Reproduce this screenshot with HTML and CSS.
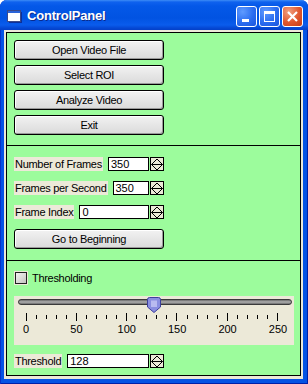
FILE: index.html
```html
<!DOCTYPE html>
<html lang="en">
<head>
<meta charset="utf-8">
<link rel="stylesheet" href="styles.css">
</head>
<body>
<div class="window">
  <div class="titlebar">
    <svg class="app-icon" width="16" height="14" viewBox="0 0 16 14">
      <rect x="1.5" y="1.5" width="13" height="11" fill="#fff" stroke="#3a4a8a"/>
      <rect x="2" y="2" width="12" height="2" fill="#2a63d8"/>
      <rect x="15" y="3" width="1" height="10" fill="#0b2f9a"/>
      <rect x="3" y="13" width="13" height="1" fill="#0b2f9a"/>
    </svg>
    <span class="title">ControlPanel</span>
    <div class="caption-buttons">
      <div class="cap-btn">
        <svg width="21" height="21" viewBox="0 0 21 21"><rect x="6" y="13" width="7" height="3" fill="#fff"/></svg>
      </div>
      <div class="cap-btn">
        <svg width="21" height="21" viewBox="0 0 21 21"><rect x="5.5" y="5.5" width="10" height="10" fill="none" stroke="#fff"/><rect x="5" y="5" width="11" height="3" fill="#fff"/></svg>
      </div>
      <div class="cap-btn close">
        <svg width="21" height="21" viewBox="0 0 21 21"><path d="M6 6 L15 15 M15 6 L6 15" stroke="#fff" stroke-width="2.2"/></svg>
      </div>
    </div>
  </div>
  <div class="client">
    <div class="panel">
      <div class="section commands">
        <button>Open Video File</button>
        <button>Select ROI</button>
        <button>Analyze Video</button>
        <button>Exit</button>
      </div>
      <div class="section frames">
        <div class="field">
          <span class="label">Number of Frames</span>
          <span class="textbox">350</span>
          <span class="spin"><svg width="12" height="13" viewBox="0 0 12 13"><path d="M0.5 6.5 L6 1 L11.5 6.5 L6 12 Z M0.5 6.5 H11.5" fill="none" stroke="#000"/></svg></span>
        </div>
        <div class="field">
          <span class="label">Frames per Second</span>
          <span class="textbox">350</span>
          <span class="spin"><svg width="12" height="13" viewBox="0 0 12 13"><path d="M0.5 6.5 L6 1 L11.5 6.5 L6 12 Z M0.5 6.5 H11.5" fill="none" stroke="#000"/></svg></span>
        </div>
        <div class="field">
          <span class="label">Frame Index</span>
          <span class="textbox">0</span>
          <span class="spin"><svg width="12" height="13" viewBox="0 0 12 13"><path d="M0.5 6.5 L6 1 L11.5 6.5 L6 12 Z M0.5 6.5 H11.5" fill="none" stroke="#000"/></svg></span>
        </div>
        <button class="wide">Go to Beginning</button>
      </div>
      <div class="section threshold">
        <div class="check"><span class="box"></span><span>Thresholding</span></div>
        <div class="slider">
          <div class="track">
            <svg class="thumb" width="14" height="16" viewBox="0 0 14 16">
              <path d="M0.5 2.5 Q0.5 0.5 2.5 0.5 H11.5 Q13.5 0.5 13.5 2.5 V10 L7 15.5 L0.5 10 Z" fill="#8a8ee0" stroke="#3c3f9c"/>
              <path d="M5 3.5 V10 M7 3.5 V10 M9 3.5 V10" stroke="#e8e8ff" stroke-width="1"/>
            </svg>
          </div>
          <div class="ticks">
            <i class="major"></i><i></i><i></i><i></i><i></i>
            <i class="major"></i><i></i><i></i><i></i><i></i>
            <i class="major"></i><i></i><i></i><i></i><i></i>
            <i class="major"></i><i></i><i></i><i></i><i></i>
            <i class="major"></i><i></i><i></i><i></i><i></i>
            <i class="major"></i>
          </div>
          <div class="scale">
            <span>0</span><span>50</span><span>100</span><span>150</span><span>200</span><span>250</span>
          </div>
        </div>
        <div class="field">
          <span class="label">Threshold</span>
          <span class="textbox">128</span>
          <span class="spin"><svg width="12" height="13" viewBox="0 0 12 13"><path d="M0.5 6.5 L6 1 L11.5 6.5 L6 12 Z M0.5 6.5 H11.5" fill="none" stroke="#000"/></svg></span>
        </div>
      </div>
    </div>
  </div>
</div>
</body>
</html>
```

FILE: styles.css
```css
body {
  margin: 0;
  font-family: "Liberation Sans", Arial, sans-serif;
  font-size: 11px;
}

.window {
  width: 308px;
  height: 384px;
  box-sizing: border-box;
  display: flex;
  flex-direction: column;
  background: #0553e4;
  border-radius: 7px 7px 0 0;
  box-shadow: inset 1px 0 #0831c8, inset -1px -1px #0020a8;
}

.titlebar {
  height: 30px;
  display: flex;
  align-items: center;
  padding: 0 5px 0 5px;
  border-radius: 7px 7px 0 0;
  background: linear-gradient(#3d8cf6 0px, #0f62ee 2px, #0458e8 6px, #0153e2 18px, #0a5cec 25px, #0548d4 28px, #0440c8 30px);
}

.app-icon {
  margin: 1px 5px 0 1px;
}

.title {
  color: #fff;
  font-weight: bold;
  font-size: 13px;
  letter-spacing: -0.2px;
  text-shadow: 1px 1px #0a2a8c;
  flex: 1;
}

.caption-buttons {
  display: flex;
  gap: 2px;
  margin-top: 3px;
}

.cap-btn {
  width: 21px;
  height: 21px;
  box-sizing: border-box;
  border: 1px solid #fff;
  border-radius: 3px;
  background: radial-gradient(circle at 30% 25%, #5f9bff, #2b6df0 55%, #1a55dc);
  display: flex;
}

.cap-btn svg {
  margin: -1px;
}

.cap-btn.close {
  background: radial-gradient(circle at 30% 25%, #f0a080, #e0572e 55%, #c43c16);
}

.client {
  flex: 1;
  margin: 0 5px 5px 4px;
  background: #ece9d8;
  padding: 2px 2px 3px 2px;
  display: flex;
}

.panel {
  flex: 1;
  border: 1px solid #000;
  background: #9cfc9c;
  display: flex;
  flex-direction: column;
}

.section {
  display: flex;
  flex-direction: column;
  align-items: flex-start;
  padding: 0 0 0 7px;
}

.commands {
  padding-top: 7px;
  height: 105px;
  gap: 5px;
  border-bottom: 1px solid #000;
}

.frames {
  padding-top: 11px;
  height: 103px;
  gap: 10px;
  border-bottom: 1px solid #000;
}

.threshold {
  padding-top: 10px;
  flex: 1;
}

button {
  width: 150px;
  height: 20px;
  border: 1px solid #000;
  border-radius: 3px;
  background: linear-gradient(#f2f2f2, #dadada);
  box-shadow: inset 1px 1px #fff, inset -1px -1px #9a9a9a;
  font-family: "Liberation Sans", Arial, sans-serif;
  font-size: 11px;
  letter-spacing: -0.3px;
  color: #000;
  padding: 0;
}

.field {
  width: 150px;
  height: 14px;
  display: flex;
  align-items: stretch;
  line-height: 14px;
}

.label {
  background: #ece9d8;
  padding: 0 1px;
  letter-spacing: -0.3px;
}

.textbox {
  flex: 1;
  margin-left: 5px;
  border: 1px solid #000;
  background: #fff;
  line-height: 12px;
  padding-left: 2px;
  font-size: 11px;
}

.spin {
  width: 14px;
  margin-left: 1px;
  box-sizing: border-box;
  border: 1px solid #000;
  background: #ece9d8;
  display: flex;
  align-items: center;
  justify-content: center;
}

.check {
  display: flex;
  align-items: center;
  gap: 5px;
  height: 14px;
  letter-spacing: -0.3px;
}

.box {
  width: 12px;
  height: 12px;
  margin-left: 1px;
  box-sizing: border-box;
  border: 1px solid #222;
  background: linear-gradient(135deg, #f4f4f2, #c4c4c0);
  outline: 1px solid #ece9d8;
}

.slider {
  margin-top: 11px;
  width: 280px;
  height: 49px;
  box-sizing: border-box;
  background: #ece9d8;
  padding: 3px 2px 0 4px;
}

.track {
  height: 6px;
  box-sizing: border-box;
  border: 1px solid #3a3a3a;
  border-radius: 3px;
  background: linear-gradient(#6a6a6a, #b0b0b0 50%, #6a6a6a);
  position: relative;
}

.thumb {
  position: absolute;
  left: 128px;
  top: -3px;
}

.ticks {
  display: flex;
  justify-content: space-between;
  align-items: flex-start;
  width: 252px;
  margin: 8px 0 0 8px;
  height: 8px;
}

.ticks i {
  width: 1px;
  height: 4px;
  margin-top: 2px;
  background: #000;
}

.ticks i.major {
  height: 8px;
  margin-top: 0;
}

.scale {
  display: flex;
  justify-content: space-between;
  width: 276px;
  margin: 2px 0 0 -4px;
  line-height: 12px;
}

.scale span {
  width: 24px;
  text-align: center;
}

.threshold .field {
  margin-top: 9px;
}
```
